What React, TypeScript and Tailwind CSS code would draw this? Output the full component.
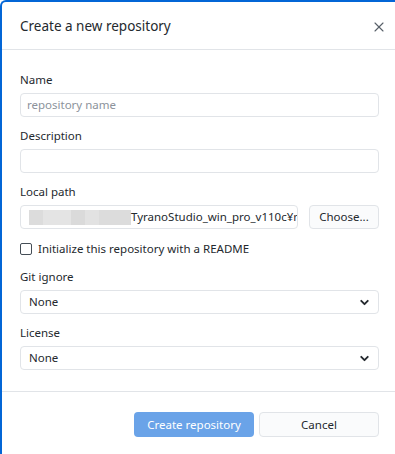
import { X, ChevronDown } from "lucide-react";

const font = { fontFamily: '"Noto Sans", "Open Sans", sans-serif' };

function Label({ children }: { children: React.ReactNode }) {
  return <div className="text-[11.5px] leading-[16px] text-[#24292e] mb-[5px]">{children}</div>;
}

function Select() {
  return (
    <div className="h-[24px] rounded-[4px] border border-[#e1e4e8] bg-white flex items-center justify-between pl-[8px] pr-[7px]">
      <span className="text-[11.5px] text-[#24292e]">None</span>
      <ChevronDown size={13} strokeWidth={3.5} className="text-[#24292e]" />
    </div>
  );
}

export default function App() {
  return (
    <div className="w-[395px] h-[454px] bg-white overflow-hidden" style={font}>
      <div className="h-full border-l-2 border-t-2 border-[#0366d6] rounded-tl-[6px] flex flex-col">
        {/* Header */}
        <div className="h-[48px] flex items-center justify-between pl-[18px] pr-[8px] pt-[2px] border-b border-[#e1e4e8]">
          <h1 className="text-[13.5px] text-[#24292e] font-normal">Create a new repository</h1>
          <X size={16} strokeWidth={1.7} className="text-[#586069]" />
        </div>

        {/* Body */}
        <div className="flex-1 pl-[18px] pr-[16px] pt-[22px]">
          <Label>Name</Label>
          <div className="h-[24px] rounded-[4px] border border-[#e1e4e8] flex items-center px-[6px] mb-[11px]">
            <span className="text-[11.5px] text-[#8c939b]">repository name</span>
          </div>

          <Label>Description</Label>
          <div className="h-[24px] rounded-[4px] border border-[#e1e4e8] mb-[11px]" />

          <Label>Local path</Label>
          <div className="flex gap-[11px] mb-[12px]">
            <div className="flex-1 h-[24px] rounded-[4px] border border-[#e1e4e8] flex items-center pl-[8px] overflow-hidden whitespace-nowrap">
              <div className="flex h-[15px] shrink-0">
                <div className="w-[14px] bg-[#dcdcdc]" />
                <div className="w-[28px] bg-[#e4e4e4]" />
                <div className="w-[14px] bg-[#dadada]" />
                <div className="w-[14px] bg-[#e2e2e2]" />
                <div className="w-[32px] bg-[#dcdcdc]" />
              </div>
              <span className="text-[11.5px] text-[#24292e]">TyranoStudio_win_pro_v110c¥n</span>
            </div>
            <div className="w-[70px] h-[24px] rounded-[4px] border border-[#e1e4e8] bg-[#fafbfc] flex items-center justify-center text-[11.5px] text-[#24292e]">
              Choose...
            </div>
          </div>

          <div className="h-[16px] flex items-center gap-[6px] mb-[12px]">
            <div className="w-[12px] h-[12px] rounded-[2px] border border-[#444d56]" />
            <span className="text-[11.5px] text-[#24292e]">Initialize this repository with a README</span>
          </div>

          <Label>Git ignore</Label>
          <div className="mb-[11px]">
            <Select />
          </div>

          <Label>License</Label>
          <Select />
        </div>

        {/* Footer */}
        <div className="h-[63px] border-t border-[#e1e4e8] flex items-center justify-end gap-[5px] pr-[16px] pt-[3px]">
          <div className="w-[120px] h-[25px] rounded-[4px] bg-[#6aa3e8] flex items-center justify-center text-[11.5px] text-white">
            Create repository
          </div>
          <div className="w-[120px] h-[25px] rounded-[4px] border border-[#e1e4e8] bg-[#fafbfc] flex items-center justify-center text-[11.5px] text-[#24292e]">
            Cancel
          </div>
        </div>
      </div>
    </div>
  );
}
